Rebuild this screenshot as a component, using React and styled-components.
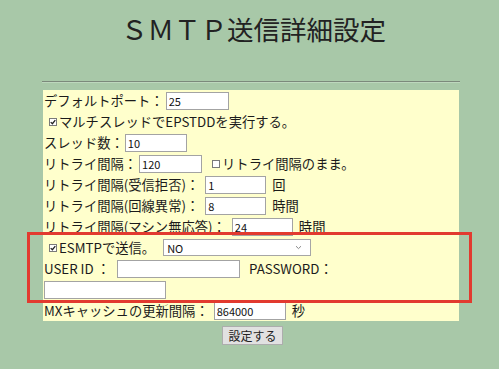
import React from "react";
import styled, { createGlobalStyle } from "styled-components";

const GlobalStyle = createGlobalStyle`
  html, body {
    margin: 0;
    padding: 0;
    background: #a8c8a8;
  }
  body {
    font-family: "Noto Sans CJK JP", "Noto Sans", sans-serif;
    color: #1b1b1b;
  }
`;

const Page = styled.div`
  width: 499px;
  height: 369px;
  background: #a8c8a8;
  overflow: hidden;
`;

const Title = styled.h1`
  margin: 0;
  padding: 13px 0 0 8px;
  height: 32px;
  line-height: 32px;
  text-align: center;
  font-size: 26.5px;
  font-weight: normal;
  color: #222;
`;

const Rule = styled.div`
  margin: 36px 0 0 42px;
  width: 418px;
  border-top: 1px solid #7b897b;
  border-bottom: 1px solid #bdd7bd;
`;

const Form = styled.div`
  position: relative;
  margin: 7px 0 0 43px;
  width: 415px;
  padding-left: 1px;
  background: #ffffcc;
`;

const Row = styled.div`
  display: flex;
  align-items: center;
  height: 21px;
  font-size: 13.3px;
  white-space: nowrap;
`;

const Field = styled.input`
  box-sizing: border-box;
  width: ${(p) => p.$w}px;
  height: 18px;
  margin: 0 0 0 ${(p) => (p.$ml == null ? 2 : p.$ml)}px;
  padding: 0 2px;
  border: 1px solid #a3a3a3;
  background: #fff;
  font-family: "Noto Sans CJK JP", "Liberation Sans", sans-serif;
  font-size: 11px;
  color: #111;
  outline: none;
`;

const Unit = styled.span`
  margin-left: ${(p) => p.$ml || 6}px;
`;

const Box = styled.span`
  display: inline-flex;
  align-items: center;
  justify-content: center;
  box-sizing: border-box;
  width: 8px;
  height: 8px;
  margin: 0 2px 0 ${(p) => p.$ml || 0}px;
  border: 1px solid #7a7a7a;
  background: #fff;
`;

const Select = styled.div`
  box-sizing: border-box;
  display: flex;
  align-items: center;
  justify-content: space-between;
  width: 148px;
  height: 17px;
  margin-left: 8px;
  padding: 0 8px 0 3px;
  border: 1px solid #a6a6a6;
  background: #fff;
  font-size: 11px;
  color: #111;
`;

const Marker = styled.div`
  position: absolute;
  left: -16px;
  top: 142px;
  width: 445px;
  height: 71px;
  box-sizing: border-box;
  border: 3px solid #e23a2f;
  pointer-events: none;
`;

const Actions = styled.div`
  display: flex;
  justify-content: center;
  margin-top: 5px;
  padding-left: 6px;
`;

const Submit = styled.button`
  box-sizing: border-box;
  width: 61px;
  height: 19px;
  padding: 0;
  border: 1px solid #adadad;
  background: #e1e1e1;
  font-family: "Noto Sans CJK JP", sans-serif;
  font-size: 12px;
  color: #222;
`;

function Check({ checked, ml }) {
  return (
    <Box $ml={ml}>
      {checked && (
        <svg width="6" height="6" viewBox="0 0 6 6">
          <path d="M0.7 3.1L2.4 4.7L5.3 1.2" fill="none" stroke="#222" strokeWidth="1.3" />
        </svg>
      )}
    </Box>
  );
}

function Chevron() {
  return (
    <svg width="7" height="5" viewBox="0 0 7 5">
      <path d="M1 1.2L3.5 3.6L6 1.2" fill="none" stroke="#888" strokeWidth="1" />
    </svg>
  );
}

export default function App() {
  return (
    <Page>
      <GlobalStyle />
      <Title>ＳＭＴＰ送信詳細設定</Title>
      <Rule />
      <Form>
        <Row>
          デフォルトポート：<Field $w={63} defaultValue="25" />
        </Row>
        <Row>
          <Check checked ml={5} />
          マルチスレッドでEPSTDDを実行する。
        </Row>
        <Row>
          スレッド数：<Field $w={62} $ml={1} defaultValue="10" />
        </Row>
        <Row>
          リトライ間隔：<Field $w={63} defaultValue="120" />
          <Check ml={10} />
          リトライ間隔のまま。
        </Row>
        <Row>
          リトライ間隔(受信拒否)：<Field $w={61} $ml={6} defaultValue="1" />
          <Unit>回</Unit>
        </Row>
        <Row>
          リトライ間隔(回線異常)：<Field $w={61} $ml={6} defaultValue="8" />
          <Unit>時間</Unit>
        </Row>
        <Row>
          リトライ間隔(マシン無応答)：<Field $w={61} $ml={6} defaultValue="24" />
          <Unit>時間</Unit>
        </Row>
        <Row>
          <Check checked ml={5} />
          ESMTPで送信。
          <Select>
            <span>NO</span>
            <Chevron />
          </Select>
        </Row>
        <Row>
          USER ID ：<Field $w={123} $ml={7} defaultValue="" />
          <Unit $ml={9}>PASSWORD：</Unit>
        </Row>
        <Row>
          <Field $w={122} $ml={0} defaultValue="" />
        </Row>
        <Row>
          MXキャッシュの更新間隔：<Field $w={72} $ml={5} defaultValue="864000" />
          <Unit>秒</Unit>
        </Row>
        <Marker />
      </Form>
      <Actions>
        <Submit>設定する</Submit>
      </Actions>
    </Page>
  );
}
